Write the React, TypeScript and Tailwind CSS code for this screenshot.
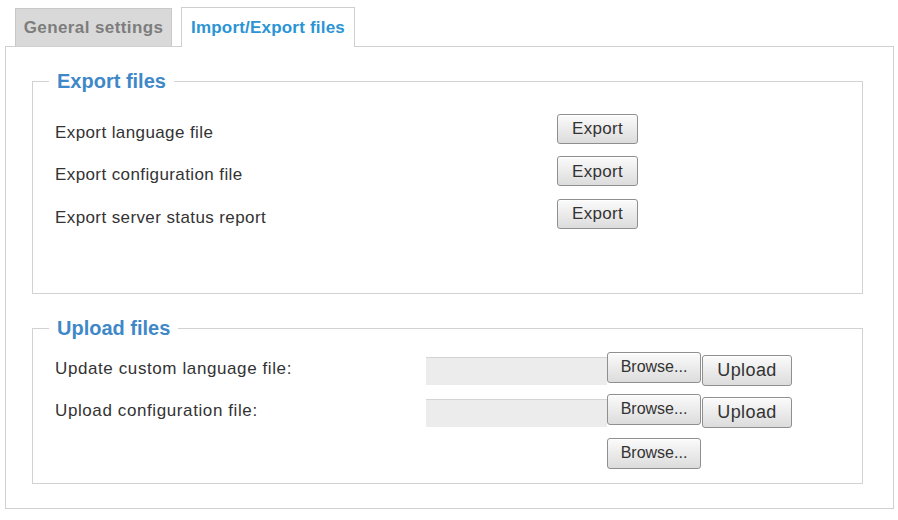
import React from "react";

const font = { fontFamily: '"Liberation Sans", Arial, sans-serif' };

const btn =
  "flex items-center justify-center rounded-[3px] border border-[#8f8f8f] bg-gradient-to-b from-[#fbfbfb] to-[#dcdcdc] text-[#333] shadow-[inset_0_1px_0_#fff]";

function Section({ title, children, className }: { title: string; children: React.ReactNode; className?: string }) {
  return (
    <fieldset className={`w-[831px] border border-[#d2d2d2] ${className ?? ""}`}>
      <legend className="ml-[16px] px-[8px] text-[20px] font-bold leading-[24px] text-[#3f88c8]">{title}</legend>
      {children}
    </fieldset>
  );
}

export default function App() {
  const exportsList = ["Export language file", "Export configuration file", "Export server status report"];

  return (
    <div className="h-[520px] w-[898px] bg-white px-[5px] pt-[7px]" style={font}>
      {/* Tabs */}
      <div className="ml-[10px] flex items-end gap-[9px]">
        <div className="flex h-[38px] w-[157px] items-center justify-center border border-b-0 border-[#c9c9c9] bg-[#d9d9d9] text-[17px] font-bold tracking-[0.4px] text-[#7d7d7d]">
          General settings
        </div>
        <div className="relative z-10 -mb-px flex h-[40px] w-[174px] items-center justify-center border border-b-0 border-[#cfcfcf] bg-white text-[17px] font-bold tracking-[0.2px] text-[#2b94d4]">
          Import/Export files
        </div>
      </div>

      {/* Panel */}
      <div className="h-[463px] w-[889px] border border-[#d0d0d0] pl-[26px] pt-[22px]">
        <Section title="Export files" className="h-[225px]">
          <div className="flex flex-col pl-[22px] pt-[18px]">
            {exportsList.map((label) => (
              <div key={label} className="flex h-[42.5px] items-center">
                <span className="w-[502px] text-[17px] tracking-[0.4px] text-[#333]">{label}</span>
                <button className={`${btn} mb-[7px] h-[30px] w-[81px] text-[17px] tracking-[0.3px]`}>Export</button>
              </div>
            ))}
          </div>
        </Section>

        <Section title="Upload files" className="mt-[22px] h-[168px]">
          <div className="flex flex-col pl-[22px] pt-[8px]">
            {["Update custom language file:", "Upload configuration file:"].map((label) => (
              <div key={label} className="flex h-[42px] items-center">
                <span className="w-[371px] text-[17px] tracking-[0.6px] text-[#333]">{label}</span>
                <div className="mt-[4px] h-[28px] w-[181px] border-t border-[#d4d4d4] bg-[#ececec]" />
                <button className={`${btn} -mt-[4px] h-[31px] w-[94px] text-[16px]`}>Browse...</button>
                <button className={`${btn} ml-[1px] mt-[3px] h-[31px] w-[90px] text-[18px] tracking-[0.4px]`}>Upload</button>
              </div>
            ))}
            <div className="flex h-[42px] items-center pl-[552px]">
              <button className={`${btn} h-[31px] w-[94px] text-[16px]`}>Browse...</button>
            </div>
          </div>
        </Section>
      </div>
    </div>
  );
}
